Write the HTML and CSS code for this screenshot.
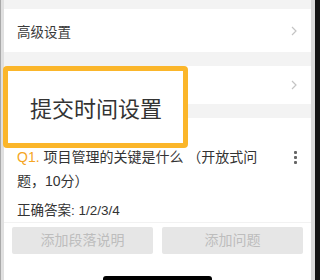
FILE: index.html
```html
<!DOCTYPE html>
<html lang="zh">
<head>
<meta charset="utf-8">
<link rel="stylesheet" href="styles.css">
</head>
<body>
<div class="device">
  <div class="bezel-l"></div>
  <div class="screen">
    <div class="band band-top"></div>
    <div class="row row-1">
      <span class="row-label">高级设置</span>
      <svg class="chev" width="6" height="10" viewBox="0 0 6 10"><path d="M1 1 L5 5 L1 9" fill="none" stroke="#c4c4c4" stroke-width="1.2"/></svg>
    </div>
    <div class="band"></div>
    <div class="row row-2">
      <span class="row-label"></span>
      <svg class="chev" width="6" height="10" viewBox="0 0 6 10"><path d="M1 1 L5 5 L1 9" fill="none" stroke="#c4c4c4" stroke-width="1.2"/></svg>
    </div>
    <div class="band"></div>
    <div class="card">
      <div class="question">
        <p class="q-text"><span class="q-num">Q1.</span><span class="q-body"> 项目管理的关键是什么 （开放式问题，10分）</span></p>
        <div class="kebab"><i></i><i></i><i></i></div>
      </div>
      <p class="answer">正确答案: 1/2/3/4</p>
      <div class="actions">
        <div class="btn">添加段落说明</div>
        <div class="btn">添加问题</div>
      </div>
    </div>
    <div class="home-bar"></div>
    <div class="highlight">提交时间设置</div>
  </div>
  <div class="bezel-r"></div>
  <div class="frame-r"></div>
</div>
</body>
</html>
```
FILE: styles.css
```css
html, body {
  margin: 0;
  padding: 0;
  background: #fff;
}
body {
  font-family: "Liberation Sans", "Noto Sans CJK SC", sans-serif;
  color: #333;
}
.device {
  display: flex;
  width: 320px;
  height: 280px;
  overflow: hidden;
}
.bezel-l {
  width: 4px;
  box-sizing: border-box;
  border-left: 1px solid #a9a9a9;
  background: #e0e0e0;
}
.screen {
  position: relative;
  width: 307px;
  display: flex;
  flex-direction: column;
  background: #fff;
}
.bezel-r {
  width: 4px;
  background: #dadada;
}
.frame-r {
  width: 5px;
  background: #141414;
}
.band {
  height: 14px;
  background: #f3f3f3;
  flex: none;
}
.band-top {
  height: 9px;
}
.row {
  flex: none;
  display: flex;
  align-items: center;
  justify-content: space-between;
  padding: 0 14px 0 13px;
  background: #fff;
}
.row-1 {
  height: 43px;
}
.row-2 {
  height: 38px;
}
.row-label {
  font-size: 13.5px;
  color: #3a3a3a;
}
.chev {
  display: block;
}
.card {
  flex: none;
  background: #fff;
  padding-top: 27px;
}
.question {
  display: flex;
  align-items: flex-start;
  padding: 0 14px 0 13px;
}
.q-text {
  margin: 0;
  width: 246px;
  font-size: 14px;
  line-height: 24px;
  color: #333;
}
.q-num {
  color: #f5a623;
}
.kebab {
  margin-left: auto;
  margin-top: 6px;
  display: flex;
  flex-direction: column;
  gap: 2px;
}
.kebab i {
  display: block;
  width: 3px;
  height: 3px;
  border-radius: 1px;
  background: #666;
}
.answer {
  margin: 9px 0 0;
  padding: 0 13px 2px;
  font-size: 13.5px;
  line-height: 18px;
  color: #333;
  border-bottom: 1px solid #f2f2f2;
}
.actions {
  display: grid;
  grid-template-columns: 1fr 1fr;
  gap: 9px;
  padding: 0 8px;
  margin-top: 4px;
}
.btn {
  height: 27px;
  line-height: 27px;
  text-align: center;
  background: #e6e6e6;
  border-radius: 2px;
  font-size: 14px;
  color: #bdbdbd;
}
.home-bar {
  flex: none;
  width: 109px;
  height: 6px;
  margin: 22px 0 0 99px;
  background: #000;
  border-radius: 3px;
}
.highlight {
  position: absolute;
  left: -1px;
  top: 66px;
  width: 185px;
  height: 82px;
  box-sizing: border-box;
  border: 5px solid #fbb62a;
  border-radius: 4px;
  background: #fff;
  display: flex;
  align-items: center;
  padding-left: 22px;
  font-size: 22px;
  color: #333;
}
```
